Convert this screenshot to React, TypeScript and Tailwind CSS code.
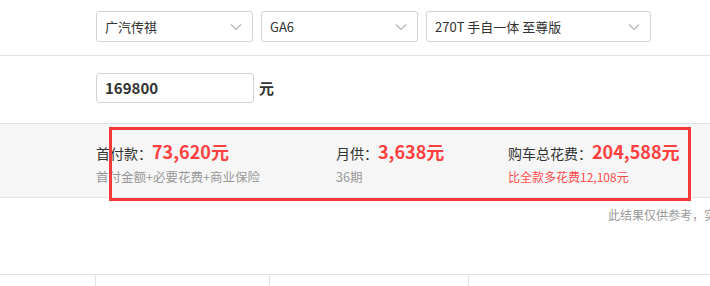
import React from "react";

const Chevron = () => (
  <svg width="12" height="8" viewBox="0 0 12 8" className="shrink-0">
    <path d="M1 1.5 L6 6.5 L11 1.5" fill="none" stroke="#b5b5b5" strokeWidth="1.2" />
  </svg>
);

const Select = ({ text, w }: { text: string; w: string }) => (
  <div className={`${w} h-[31px] border border-[#d2d2d2] rounded-[3px] bg-white flex items-center justify-between pl-[8px] pr-[10px] text-[13px] text-[#333]`}>
    <span>{text}</span>
    <Chevron />
  </div>
);

export default function App() {
  return (
    <div
      className="relative w-[710px] h-[286px] overflow-hidden bg-white"
      style={{ fontFamily: '"Microsoft YaHei", "Noto Sans CJK SC", "Noto Sans", sans-serif' }}
    >
      <div className="h-[56px] border-b border-[#e3e3e3] flex items-start pt-[11px] pl-[96px] gap-[8px]">
        <Select text="广汽传祺" w="w-[157px]" />
        <Select text="GA6" w="w-[157px]" />
        <Select text="270T 手自一体 至尊版" w="w-[225px]" />
      </div>
      <div className="h-[67px] flex items-start pt-[17px] pl-[96px]">
        <div className="w-[158px] h-[30px] border border-[#d2d2d2] rounded-[3px] flex items-center pl-[8px] text-[15px] font-bold text-[#333]">
          169800
        </div>
        <span className="ml-[5px] mt-[4px] text-[15px] font-bold text-[#333]">元</span>
      </div>
      <div className="h-[75px] bg-[#f6f6f6] border-t border-b border-[#e3e3e3] flex pl-[96px] pt-[14px]">
        <div className="w-[240px] flex flex-col">
          <div className="flex items-baseline h-[26px]">
            <span className="text-[14px] text-[#333]">首付款：</span>
            <span className="text-[18px] font-bold text-[#ff4040]">73,620元</span>
          </div>
          <div className="text-[12.5px] text-[#999] mt-[4px]">首付金额+必要花费+商业保险</div>
        </div>
        <div className="w-[172px] flex flex-col">
          <div className="flex items-baseline h-[26px]">
            <span className="text-[14px] text-[#333]">月供：</span>
            <span className="text-[18px] font-bold text-[#ff4040]">3,638元</span>
          </div>
          <div className="text-[12.5px] text-[#999] mt-[4px]">36期</div>
        </div>
        <div className="flex flex-col">
          <div className="flex items-baseline h-[26px]">
            <span className="text-[14px] text-[#333]">购车总花费：</span>
            <span className="text-[18px] font-bold text-[#ff4040]">204,588元</span>
          </div>
          <div className="text-[12px] text-[#ff4d4d] mt-[4px]">比全款多花费12,108元</div>
        </div>
      </div>
      <div className="h-[88px] flex flex-col">
        <div className="pl-[608px] pt-[8px] text-[12px] text-[#999] whitespace-nowrap">此结果仅供参考，实际费用以当地4S店报价为准</div>
        <div className="mt-auto h-[12px] border-t border-[#e3e3e3] flex">
          <div className="w-[96px] border-r border-[#e3e3e3]" />
          <div className="w-[174px] border-r border-[#e3e3e3]" />
          <div className="w-[199px] border-r border-[#e3e3e3]" />
        </div>
      </div>
      <div className="absolute left-[109px] top-[127px] w-[582px] h-[74px] border-[3px] border-[#f23a3a] pointer-events-none" />
    </div>
  );
}
